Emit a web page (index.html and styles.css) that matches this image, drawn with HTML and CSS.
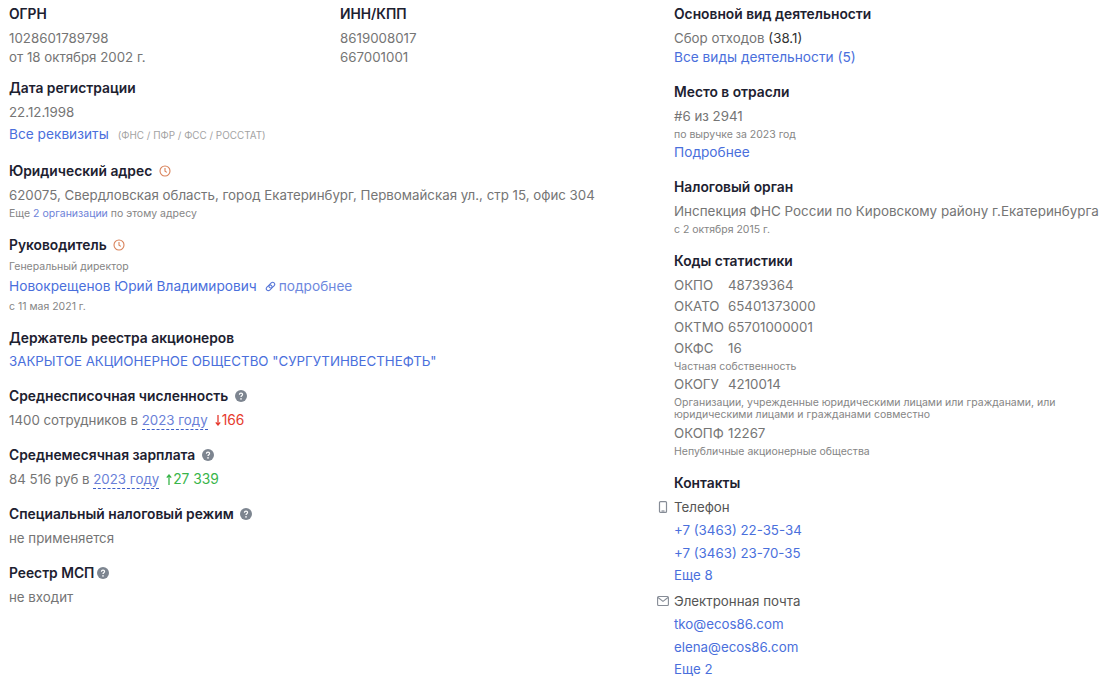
FILE: index.html
```html
<!DOCTYPE html>
<html lang="ru">
<head>
<meta charset="utf-8">
<title>Реквизиты</title>
<link rel="stylesheet" href="styles.css">
</head>
<body>
<svg class="defs" width="0" height="0" aria-hidden="true">
  <symbol id="clock" viewBox="0 0 12 12"><circle cx="6" cy="6" r="5" fill="none" stroke="currentColor" stroke-width="1.1"/><path d="M6 3v3.2l1.9 1.2" fill="none" stroke="currentColor" stroke-width="1.1"/></symbol>
  <symbol id="help" viewBox="0 0 12 12"><circle cx="6" cy="6" r="6" fill="currentColor"/><path d="M4.4 4.7c0-1 .7-1.600 1.600-1.600s1.600.6 1.600 1.400c0 1.200-1.600 1.200-1.600 2.500" fill="none" stroke="#fff" stroke-width="1.2"/><circle cx="6" cy="8.900" r=".8" fill="#fff"/></symbol>
  <symbol id="arrow-down" viewBox="0 0 6 11"><path d="M3 0v9.500M.8 7.300L3 10l2.200-2.700" fill="none" stroke="currentColor" stroke-width="1.300"/></symbol>
  <symbol id="arrow-up" viewBox="0 0 6 11"><path d="M3 11V1.500M.8 3.700L3 1l2.200 2.700" fill="none" stroke="currentColor" stroke-width="1.300"/></symbol>
</svg>
<main class="page">
  <div class="col col-left">
    <div class="pair">
      <section class="block">
        <h3>ОГРН</h3>
        <div class="val">1028601789798</div>
        <div class="val">от 18 октября 2002 г.</div>
      </section>
      <section class="block">
        <h3>ИНН/КПП</h3>
        <div class="val">8619008017</div>
        <div class="val">667001001</div>
      </section>
    </div>
    <section class="block b-reg">
      <h3 class="h-wide">Дата регистрации</h3>
      <div class="val">22.12.1998</div>
      <div class="val all-req"><a href="#" class="word">Все реквизиты</a><span class="note">(ФНС / ПФР / ФСС / РОССТАТ)</span></div>
    </section>
    <section class="block b-addr">
      <h3 class="h-wide">Юридический адрес <svg class="ico clock"><use href="#clock"/></svg></h3>
      <div class="val">620075, Свердловская область, город Екатеринбург, Первомайская ул., стр 15, офис 304</div>
      <div class="small">Еще <a href="#" class="soft">2 организации</a> по этому адресу</div>
    </section>
    <section class="block b-head">
      <h3 class="h-close">Руководитель <svg class="ico clock"><use href="#clock"/></svg></h3>
      <div class="small">Генеральный директор</div>
      <div class="val val-spaced"><a href="#" class="word">Новокрещенов Юрий Владимирович</a><a href="#" class="more word"><svg class="ico link-ico" viewBox="0 0 12 12"><g fill="none" stroke="currentColor" stroke-width="1.200" transform="rotate(-45 6 6)"><rect x="0.500" y="3.800" width="7" height="4.400" rx="2.200"/><rect x="4.500" y="3.800" width="7" height="4.400" rx="2.200"/></g></svg>подробнее</a></div>
      <div class="small small-spaced">с 11 мая 2021 г.</div>
    </section>
    <section class="block">
      <h3 class="h-link">Держатель реестра акционеров</h3>
      <div class="val"><a href="#">ЗАКРЫТОЕ АКЦИОНЕРНОЕ ОБЩЕСТВО "СУРГУТИНВЕСТНЕФТЬ"</a></div>
    </section>
    <section class="block">
      <h3>Среднесписочная численность <svg class="ico help"><use href="#help"/></svg></h3>
      <div class="val">1400 сотрудников в <a href="#" class="dashed">2023 году</a><span class="delta down"><svg class="arrow"><use href="#arrow-down"/></svg>166</span></div>
    </section>
    <section class="block">
      <h3>Среднемесячная зарплата <svg class="ico help"><use href="#help"/></svg></h3>
      <div class="val">84 516 руб в <a href="#" class="dashed">2023 году</a><span class="delta up"><svg class="arrow"><use href="#arrow-up"/></svg>27 339</span></div>
    </section>
    <section class="block">
      <h3>Специальный налоговый режим <svg class="ico help"><use href="#help"/></svg></h3>
      <div class="val">не применяется</div>
    </section>
    <section class="block">
      <h3>Реестр МСП <svg class="ico help help-tight"><use href="#help"/></svg></h3>
      <div class="val">не входит</div>
    </section>
  </div>
  <div class="col col-right">
    <section class="block">
      <h3>Основной вид деятельности</h3>
      <div class="val">Сбор отходов <span class="dark">(38.1)</span></div>
      <div class="val"><a href="#" class="word">Все виды деятельности (5)</a></div>
    </section>
    <section class="block">
      <h3>Место в отрасли</h3>
      <div class="val">#6 из 2941</div>
      <div class="small">по выручке за 2023 год</div>
      <div class="val"><a href="#" class="word">Подробнее</a></div>
    </section>
    <section class="block b-tight">
      <h3>Налоговый орган</h3>
      <div class="val val-org">Инспекция ФНС России по Кировскому району г.Екатеринбурга</div>
      <div class="small">с 2 октября 2015 г.</div>
    </section>
    <section class="block b-tight">
      <h3>Коды статистики</h3>
      <div class="stat"><span class="code">ОКПО</span>48739364</div>
      <div class="stat"><span class="code">ОКАТО</span>65401373000</div>
      <div class="stat"><span class="code">ОКТМО</span>65701000001</div>
      <div class="stat"><span class="code">ОКФС</span>16</div>
      <div class="small">Частная собственность</div>
      <div class="stat stat-after"><span class="code">ОКОГУ</span>4210014</div>
      <div class="small small-two">Организации, учрежденные юридическими лицами или гражданами, или юридическими лицами и гражданами совместно</div>
      <div class="stat stat-after"><span class="code">ОКОПФ</span>12267</div>
      <div class="small">Непубличные акционерные общества</div>
    </section>
    <section class="block b-tight">
      <h3>Контакты</h3>
      <div class="val contact-label"><svg class="ico side" viewBox="0 0 12 12"><rect x="2.500" y="0.600" width="7" height="10.800" rx="1" fill="none" stroke="currentColor" stroke-width="1.200"/><path d="M4.500 10h3" stroke="currentColor" stroke-width="1.200"/></svg>Телефон</div>
      <div class="val contact"><a href="#">+7 (3463) 22-35-34</a></div>
      <div class="val contact"><a href="#">+7 (3463) 23-70-35</a></div>
      <div class="val contact-more"><a href="#">Еще 8</a></div>
      <div class="val contact-label label-2"><svg class="ico side" viewBox="0 0 12 12"><rect x="0.600" y="1.500" width="10.800" height="9" rx="1" fill="none" stroke="currentColor" stroke-width="1.100"/><path d="M1 2.500l5 3.900 5-3.900" fill="none" stroke="currentColor" stroke-width="1.100"/></svg>Электронная почта</div>
      <div class="val contact"><a href="#">tko@ecos86.com</a></div>
      <div class="val contact"><a href="#">elena@ecos86.com</a></div>
      <div class="val contact-more"><a href="#">Еще 2</a></div>
    </section>
  </div>
</main>
</body>
</html>
```
FILE: styles.css
```css
* { box-sizing: border-box; }
html, body { margin: 0; background: #fff; }
body {
  font-family: Inter, "Noto Sans", sans-serif;
  font-size: 13.300px;
  color: #757575;
  overflow: hidden;
}
.defs { position: absolute; }
a { color: #4a6fdc; text-decoration: none; }
.word { font-size: 13.700px; }
.page { display: grid; grid-template-columns: 665px 436px; padding: 4px 0 0 9px; }
.col { min-width: 0; }
.pair { display: grid; grid-template-columns: 331px 1fr; }
.block { margin-bottom: 15.500px; }
.pair .block { margin-bottom: 11px; }
.b-tight { margin-bottom: 13.500px; }
.b-reg { margin-bottom: 16px; }
.b-addr { margin-bottom: 13px; }
.b-head { margin-bottom: 13.500px; }
h3 {
  margin: 0 0 4.500px;
  font-size: 13.800px;
  line-height: 20px;
  font-weight: 600;
  color: #1d2130;
}
.h-wide { margin-bottom: 5.500px; }
.h-close { margin-bottom: 2.500px; }
.h-link { margin-bottom: 3.500px; }
.val { line-height: 19px; }
.val-org { font-size: 13.430px; }
.val-spaced { margin-top: 2.500px; }
.all-req { margin-top: 2.500px; }
.small { font-size: 10.500px; line-height: 17px; color: #858585; }
.soft { color: #6d82d8; }
.small-spaced { margin-top: 1.500px; }
.small-two { line-height: 12px; margin: 3.500px 0 2.500px; width: 400px; }
.note { margin-left: 9px; font-size: 9.900px; color: #a3a3a3; }
.more { margin-left: 8px; color: #6d88de; }
.link-ico { width: 11px; height: 11px; margin-right: 3px; vertical-align: -1px; color: #5a78d8; }
.dark { color: #333; }
.ico { display: inline-block; }
.clock { width: 12px; height: 12px; margin-left: 3px; color: #d9825a; vertical-align: -1px; }
.help { width: 12px; height: 12px; margin-left: 3px; color: #7d8590; vertical-align: -1px; }
.help-tight { margin-left: -1px; }
.dashed { color: #6a7fd8; border-bottom: 1px dashed #3f5fc9; padding-bottom: 1px; }
.delta { margin-left: 7px; font-size: 13.800px; }
.arrow { width: 6px; height: 11px; margin-right: 1px; vertical-align: -1px; }
.down { color: #e63a2e; }
.up { color: #39b54a; }
.stat { line-height: 19px; margin-top: 2px; }
h3 + .stat { margin-top: 0; }
.stat-after { margin-top: 0; }
.code { display: inline-block; width: 54px; }
.contact-label { position: relative; color: #555; }
.label-2 { margin-top: 7px; }
.contact { margin-top: 4px; }
.contact-more { margin-top: 3px; }
.side { position: absolute; left: -17.500px; top: 3px; width: 12px; height: 12px; color: #868c96; }
```
